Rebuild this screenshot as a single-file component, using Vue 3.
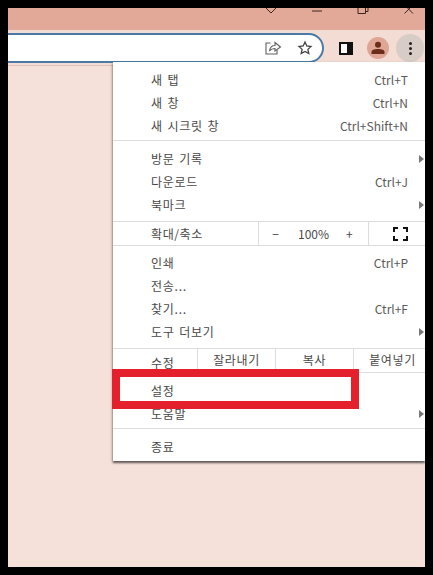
<script setup>
const group1 = [
  { label: '새 탭', key: 'Ctrl+T' },
  { label: '새 창', key: 'Ctrl+N' },
  { label: '새 시크릿 창', key: 'Ctrl+Shift+N' },
]
const group2 = [
  { label: '방문 기록', arrow: true },
  { label: '다운로드', key: 'Ctrl+J' },
  { label: '북마크', arrow: true },
]
const group3 = [
  { label: '인쇄', key: 'Ctrl+P' },
  { label: '전송...' },
  { label: '찾기...', key: 'Ctrl+F' },
  { label: '도구 더보기', arrow: true },
]
const group4 = [
  { label: '설정' },
  { label: '도움말', arrow: true },
]
const group5 = [{ label: '종료' }]
</script>

<template>
  <div class="screen">
    <div class="frame">
      <header class="titlebar">
        <svg class="win" width="14" height="6" viewBox="0 0 14 6"><path d="M2 0 L7 5 L12 0" /></svg>
        <svg class="win" width="14" height="6" viewBox="0 0 14 6"><path d="M2 3 H12" /></svg>
        <svg class="win" width="14" height="6" viewBox="0 0 14 6"><path d="M2 0 V5.5 H9.5 V0 M9.5 3.5 H12 V0" /></svg>
        <svg class="win" width="14" height="6" viewBox="0 0 14 6"><path d="M2.5 -3 L11 5.5 M11 -3 L2.5 5.5" /></svg>
      </header>

      <div class="toolbar">
        <div class="omnibox">
          <svg class="icon" width="18" height="18" viewBox="0 0 18 18">
            <path class="line" d="M6.5 4 H2 V15 H13 V11" />
            <path class="line" d="M5.5 12 C6 8.5 8.5 6.5 11 6.5 V3.5 L16.5 8 L11 12 V9.5 C9 9.5 7 10 5.5 12 Z" />
          </svg>
          <svg class="icon star" width="18" height="18" viewBox="0 0 18 18">
            <path class="line strong" d="M9 3 L10.8 7 L15 7.5 L11.9 10.4 L12.8 14.6 L9 12.5 L5.2 14.6 L6.1 10.4 L3 7.5 L7.2 7 Z" />
          </svg>
        </div>
        <svg class="panel" width="14" height="13" viewBox="0 0 14 13">
          <rect x="1" y="1" width="12" height="11" fill="#fff" stroke="#111" stroke-width="2" />
          <rect x="8" y="1" width="5" height="11" fill="#111" />
        </svg>
        <div class="avatar">
          <svg width="14" height="14" viewBox="0 0 14 14">
            <circle cx="7" cy="3.8" r="3" fill="#6b2d18" />
            <path d="M0.5 13 V11 C0.5 8.8 4 8 7 8 C10 8 13.5 8.8 13.5 11 V13 Z" fill="#6b2d18" />
          </svg>
        </div>
        <div class="more">
          <i></i><i></i><i></i>
        </div>
      </div>

      <main class="content"></main>

      <nav class="menu">
        <section class="group">
          <div v-for="item in group1" :key="item.label" class="row">
            <span>{{ item.label }}</span>
            <span v-if="item.key" class="key">{{ item.key }}</span>
          </div>
        </section>

        <section class="group tall">
          <div v-for="item in group2" :key="item.label" class="row">
            <span>{{ item.label }}</span>
            <span v-if="item.key" class="key">{{ item.key }}</span>
            <b v-if="item.arrow" class="arrow"></b>
          </div>
        </section>

        <div class="split zoom">
          <span class="cell-label">확대/축소</span>
          <div class="zoom-ctl">
            <span>−</span><span class="pct">100%</span><span class="plus">+</span>
          </div>
          <div class="fs">
            <svg width="15" height="14" viewBox="0 0 15 14">
              <path d="M1 5 V1 H5 M10 1 H14 V5 M14 9 V13 H10 M5 13 H1 V9" fill="none" stroke="#111" stroke-width="2" />
            </svg>
          </div>
        </div>

        <section class="group mid">
          <div v-for="item in group3" :key="item.label" class="row">
            <span>{{ item.label }}</span>
            <span v-if="item.key" class="key">{{ item.key }}</span>
            <b v-if="item.arrow" class="arrow"></b>
          </div>
        </section>

        <div class="split edit">
          <span class="cell-label low">수정</span>
          <span class="ed">잘라내기</span>
          <span class="ed">복사</span>
          <span class="ed">붙여넣기</span>
        </div>

        <section class="group">
          <div v-for="item in group4" :key="item.label" class="row">
            <span>{{ item.label }}</span>
            <b v-if="item.arrow" class="arrow"></b>
          </div>
        </section>

        <section class="group last">
          <div v-for="item in group5" :key="item.label" class="row">
            <span>{{ item.label }}</span>
          </div>
        </section>
      </nav>

      <div class="highlight"></div>
    </div>
  </div>
</template>

<style>
html, body { margin: 0; background: #000; }
</style>

<style scoped>
.screen {
  width: 433px;
  height: 575px;
  background: #000;
  padding: 8px;
  box-sizing: border-box;
  font-family: "Noto Sans CJK KR", "Noto Sans", sans-serif;
  overflow: hidden;
}
.frame {
  position: relative;
  width: 417px;
  height: 559px;
  display: flex;
  flex-direction: column;
  overflow: hidden;
  background: #f5e1da;
}
.titlebar {
  height: 22px;
  flex: none;
  background: #e2a999;
  display: flex;
  justify-content: flex-end;
  align-items: flex-start;
  gap: 32px;
  padding-right: 9px;
  box-sizing: border-box;
}
.win path { fill: none; stroke: #3a2620; stroke-width: 1; }
.toolbar {
  height: 36px;
  flex: none;
  box-sizing: border-box;
  background: #f3dcd4;
  border-bottom: 1px solid #e3c3ba;
  padding-top: 3px;
  display: flex;
  align-items: flex-start;
}
.omnibox {
  width: 336px;
  margin-left: -20px;
  height: 30px;
  flex: none;
  box-sizing: border-box;
  background: #fff;
  border: 2px solid #4a7ba6;
  border-radius: 15px;
  display: flex;
  align-items: center;
  justify-content: flex-end;
  gap: 14px;
  padding-right: 8px;
}
.icon { display: block; }
.line { fill: none; stroke: #5f5f5f; stroke-width: 1.1; }
.line.strong { stroke: #444; stroke-width: 1.3; }
.panel { margin: 9px 0 0 15px; flex: none; }
.avatar {
  width: 22px;
  height: 22px;
  border-radius: 50%;
  background: #dfa595;
  margin: 4px 0 0 14px;
  flex: none;
  display: flex;
  align-items: center;
  justify-content: center;
}
.more {
  width: 28px;
  height: 28px;
  border-radius: 50%;
  background: #d8ccc7;
  margin: 1px 0 0 7px;
  flex: none;
  display: flex;
  flex-direction: column;
  align-items: center;
  justify-content: center;
  gap: 2px;
}
.more i {
  width: 3px;
  height: 3px;
  border-radius: 50%;
  background: #222;
}
.content { flex: 1; }

.menu {
  position: absolute;
  left: 105px;
  right: 0;
  top: 54px;
  height: 399px;
  box-sizing: border-box;
  background: #fff;
  box-shadow: 0 2px 2px rgba(0, 0, 0, 0.55), -1px 1px 3px rgba(0, 0, 0, 0.2);
  padding-top: 6px;
  color: #484848;
  font-size: 12px;
  display: flex;
  flex-direction: column;
}
.group {
  padding-bottom: 3px;
  border-bottom: 1px solid #dcdcdc;
  margin-bottom: 6px;
}
.group.tall { padding-bottom: 5px; margin-bottom: 0; }
.group.mid { padding-bottom: 5px; margin-top: -1px; margin-bottom: 0; }
.group.last { border-bottom: none; margin: 0; padding: 0; }
.row {
  height: 23px;
  display: flex;
  align-items: center;
  justify-content: space-between;
  padding: 0 17px 0 38px;
  position: relative;
  letter-spacing: 0.75px;
  word-spacing: 1.2px;
}
.key { color: #5a5a5a; letter-spacing: 0; word-spacing: 0; }
.arrow {
  position: absolute;
  right: 1px;
  top: 8px;
  width: 0;
  height: 0;
  border-left: 5px solid #777;
  border-top: 4px solid transparent;
  border-bottom: 4px solid transparent;
}
.split {
  display: flex;
  align-items: stretch;
  border-bottom: 1px solid #dcdcdc;
  box-sizing: border-box;
}
.zoom { height: 24px; margin-bottom: 6px; }
.cell-label {
  padding-left: 38px;
  display: flex;
  align-items: center;
  letter-spacing: 0.6px;
  flex: none;
}
.zoom .cell-label { width: 145px; box-sizing: border-box; }
.zoom-ctl {
  width: 111px;
  flex: none;
  box-sizing: border-box;
  border-left: 1px solid #dcdcdc;
  border-right: 1px solid #dcdcdc;
  display: flex;
  align-items: center;
  justify-content: center;
  gap: 19px;
  padding-right: 2px;
}
.plus { margin-left: -2px; }
.pct { letter-spacing: 0; color: #4a4a4a; }
.fs { flex: 1; display: flex; align-items: center; padding-left: 24px; }
.edit { height: 24px; margin-bottom: 6px; }
.edit .cell-label { width: 84px; box-sizing: border-box; padding-top: 4px; }
.ed {
  width: 78px;
  flex: none;
  box-sizing: border-box;
  border-left: 1px solid #dcdcdc;
  display: flex;
  align-items: center;
  justify-content: center;
  letter-spacing: 0.6px;
  padding-bottom: 2px;
}
.highlight {
  position: absolute;
  left: 104px;
  top: 361px;
  width: 247px;
  height: 40px;
  box-sizing: border-box;
  border: 8px solid #e3202b;
}
</style>
